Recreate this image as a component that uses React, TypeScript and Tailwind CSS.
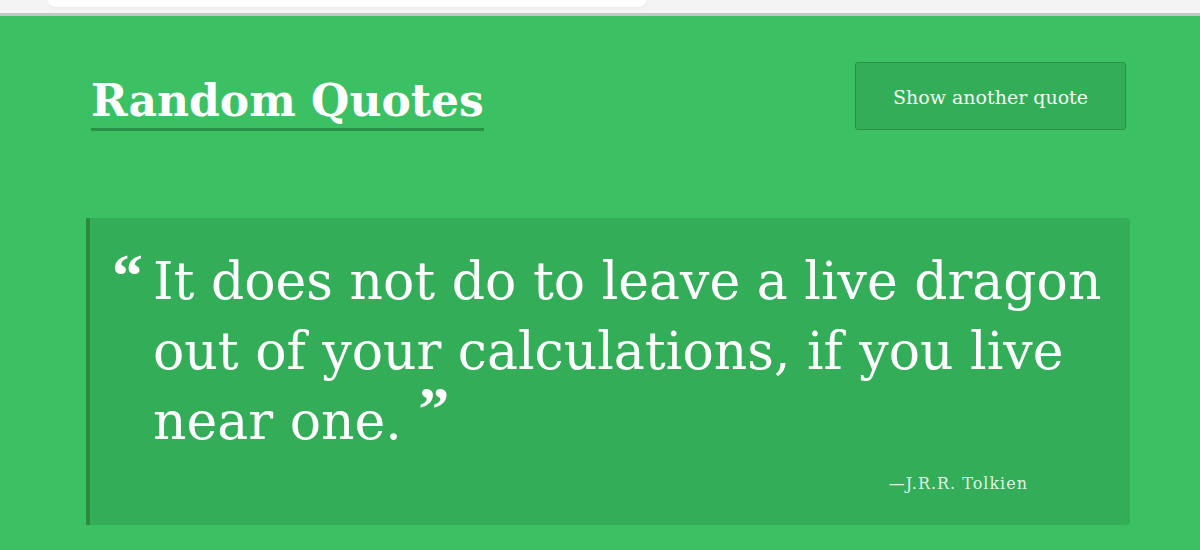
import React from "react";

const serif = { fontFamily: '"DejaVu Serif", "Liberation Serif", serif' };
const markFont = { fontFamily: '"Liberation Serif", serif' };

export default function App() {
  return (
    <div className="min-h-screen bg-[#3bc163]" style={serif}>
      {/* browser strip */}
      <div className="h-[16px] bg-[#f4f4f4] border-b-[3px] border-[#c4c8c5]">
        <div className="ml-[48px] h-[7px] w-[598px] rounded-b-[14px] bg-white shadow-[0_1px_3px_rgba(0,0,0,0.06)]" />
      </div>

      <div className="ml-[86px] w-[1044px]">
        <header className="flex items-start justify-between pl-[5px] pr-[4px] pt-[46px]">
          <h1 className="mt-[14px] border-b-[3px] border-[#2b9048] pb-[2px] text-[44px] font-bold leading-[50px] text-white">
            Random Quotes
          </h1>
          <button className="h-[68px] w-[271px] rounded-[3px] border border-[#2a8e47] bg-[#34ad58] pt-[2px] text-[19px] text-[#f2fbf4]">
            Show another quote
          </button>
        </header>

        <blockquote className="mt-[87px] rounded-r-[4px] border-l-[4px] border-[#2a8a40] bg-[#34ad58] pb-[29px] pl-[22px] pr-[16px] pt-[28px]">
          <div className="flex">
            <span className="mt-[14px] w-[41px] shrink-0 text-[62px] font-bold leading-[30px] text-white" style={markFont}>
              &ldquo;
            </span>
            <p className="text-[52px] leading-[70px] text-white">
              It does not do to leave a live dragon out of your calculations, if you live near one.{" "}
              <span className="inline-block align-top text-[62px] font-bold leading-[44px] text-white" style={markFont}>
                &rdquo;
              </span>
            </p>
          </div>
          <div className="mt-[16px] pr-[86px] text-right text-[16px] tracking-[1px] text-[#dff4e4]">
            —J.R.R. Tolkien
          </div>
        </blockquote>
      </div>
    </div>
  );
}
